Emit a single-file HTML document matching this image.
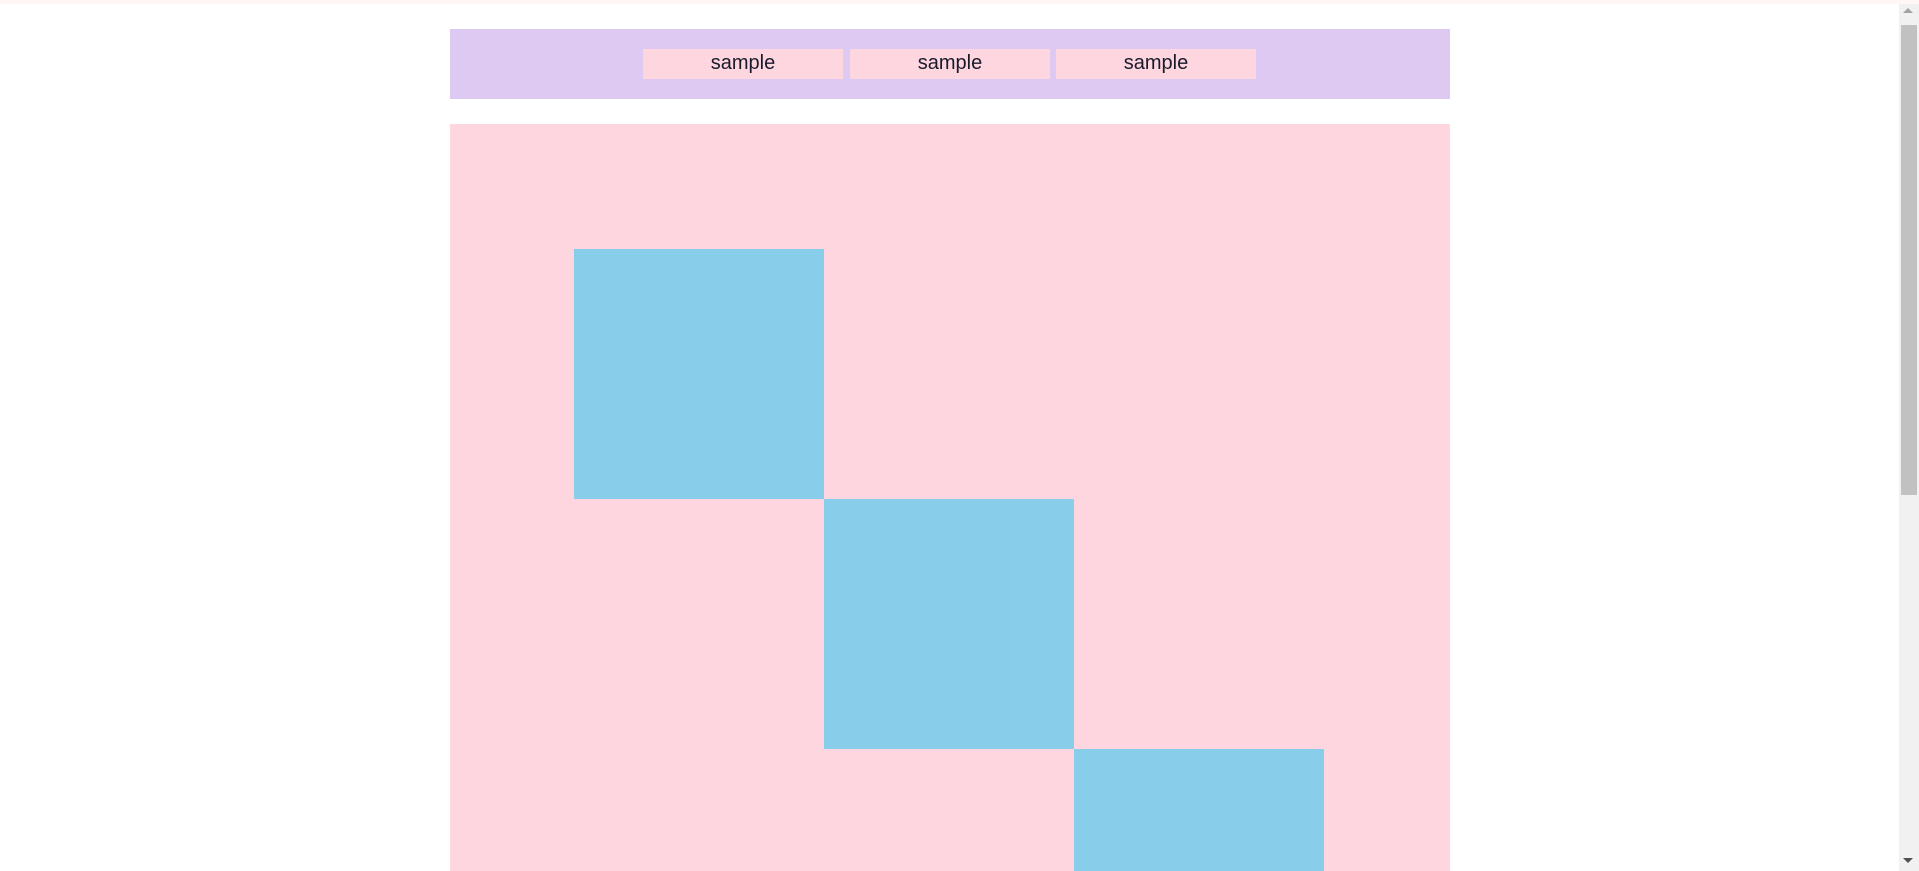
<!DOCTYPE html>
<html><head><style>
html,body{margin:0;padding:0;overflow:hidden;width:1919px;height:871px;background:#fff;position:relative}
.strip{position:absolute;left:0;top:0;width:1919px;height:4px;background:#fff7f5}
.nav{position:absolute;left:450px;top:29px;width:1000px;height:70px;background:#dec9f3}
.btn{position:absolute;top:20px;width:200px;height:30px;background:#fdd6df;font:20px/28px "Liberation Sans",sans-serif;text-align:center;color:#1a1a2a}
.main{position:absolute;left:450px;top:124px;width:1000px;height:747px;background:#fdd6df;overflow:hidden}
.sq{position:absolute;width:250px;height:250px;background:#88cde9}
.sb{position:absolute;left:1899px;top:4px;width:20px;height:867px;background:#f1f1f1}
.th{position:absolute;left:1901px;top:25px;width:16px;height:470px;background:#c1c1c1}
</style></head><body>
<div class="strip"></div>
<div class="nav">
<div class="btn" style="left:193px">sample</div>
<div class="btn" style="left:400px">sample</div>
<div class="btn" style="left:606px">sample</div>
</div>
<div class="main">
<div class="sq" style="left:124px;top:125px"></div>
<div class="sq" style="left:374px;top:375px"></div>
<div class="sq" style="left:624px;top:625px"></div>
</div>
<div class="sb"></div><div class="th"></div>
<div style="position:absolute;left:1903px;top:8px;width:0;height:0;border-left:5px solid transparent;border-right:5px solid transparent;border-bottom:5px solid #a3a3a3"></div>
<div style="position:absolute;left:1903px;top:858px;width:0;height:0;border-left:5px solid transparent;border-right:5px solid transparent;border-top:5px solid #505050"></div>
</body></html>
